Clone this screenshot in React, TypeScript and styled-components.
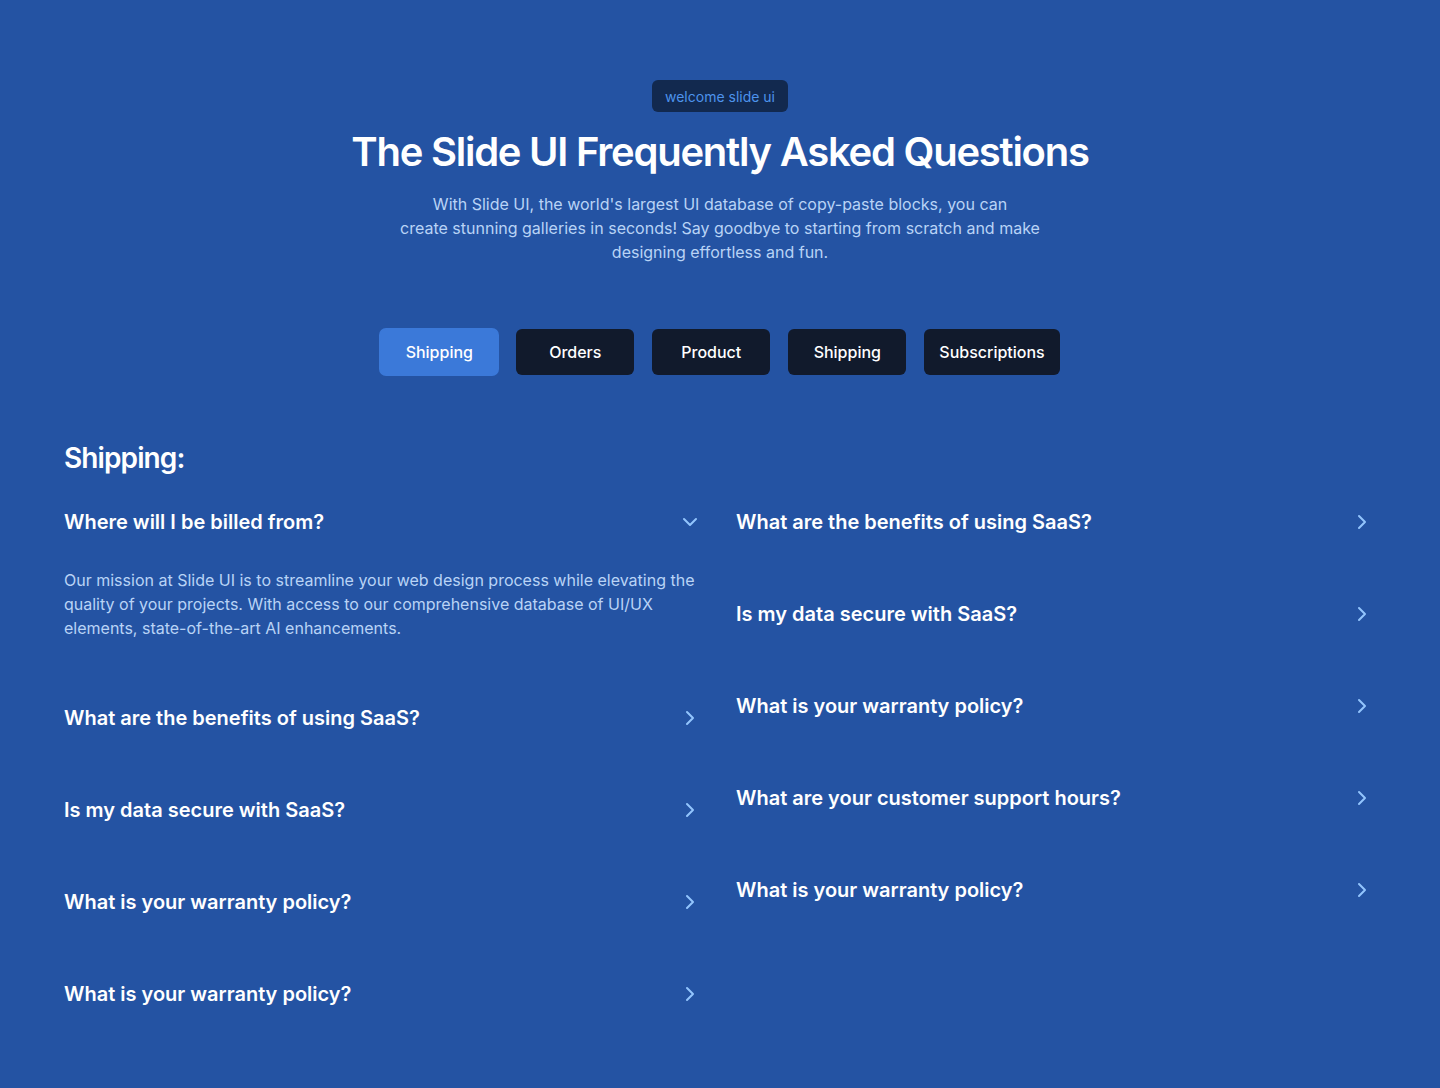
import React, { useState } from 'react';
import styled, { createGlobalStyle } from 'styled-components';
import { ChevronDown, ChevronRight } from 'lucide-react';

const GlobalStyle = createGlobalStyle`
  html, body {
    margin: 0;
    padding: 0;
    background: #2453a3;
  }
  body {
    font-family: Inter, 'Noto Sans', sans-serif;
    -webkit-font-smoothing: antialiased;
  }
`;

const tabs = ['Shipping', 'Orders', 'Product', 'Shipping', 'Subscriptions'];

const answer =
  'Our mission at Slide UI is to streamline your web design process while elevating the quality of your projects. With access to our comprehensive database of UI/UX elements, state-of-the-art AI enhancements.';

const leftItems = [
  'Where will I be billed from?',
  'What are the benefits of using SaaS?',
  'Is my data secure with SaaS?',
  'What is your warranty policy?',
  'What is your warranty policy?',
];

const rightItems = [
  'What are the benefits of using SaaS?',
  'Is my data secure with SaaS?',
  'What is your warranty policy?',
  'What are your customer support hours?',
  'What is your warranty policy?',
];

const App: React.FC = () => {
  const [activeTab, setActiveTab] = useState(0);
  const [open, setOpen] = useState<string>('l-0');

  const renderItem = (q: string, key: string) => {
    const isOpen = open === key;
    return (
      <Item key={key}>
        <Question onClick={() => setOpen(isOpen ? '' : key)}>
          <span>{q}</span>
          <IconWrap>{isOpen ? <ChevronDown size={24} strokeWidth={2} /> : <ChevronRight size={24} strokeWidth={2} />}</IconWrap>
        </Question>
        {isOpen && <Answer>{answer}</Answer>}
      </Item>
    );
  };

  return (
    <Page>
      <GlobalStyle />
      <Header>
        <Badge>welcome slide ui</Badge>
        <Title>The Slide UI Frequently Asked Questions</Title>
        <Lead>
          With Slide UI, the world's largest UI database of copy-paste blocks, you can
          <br />
          create stunning galleries in seconds! Say goodbye to starting from scratch and make designing effortless and
          fun.
        </Lead>
      </Header>
      <Tabs>
        {tabs.map((t, i) => (
          <Tab key={i} $active={i === activeTab} onClick={() => setActiveTab(i)}>
            {t}
          </Tab>
        ))}
      </Tabs>
      <Section>
        <SectionTitle>{tabs[activeTab]}:</SectionTitle>
        <Columns>
          <Column>{leftItems.map((q, i) => renderItem(q, `l-${i}`))}</Column>
          <Column>{rightItems.map((q, i) => renderItem(q, `r-${i}`))}</Column>
        </Columns>
      </Section>
    </Page>
  );
};

const Page = styled.div`
  min-height: 1088px;
  background: #2453a3;
  padding: 80px 64px 48px;
  box-sizing: border-box;
`;

const Header = styled.header`
  display: flex;
  flex-direction: column;
  align-items: center;
  text-align: center;
`;

const Badge = styled.span`
  display: inline-flex;
  align-items: center;
  height: 32px;
  padding: 0 13px;
  border-radius: 6px;
  background: #12294f;
  color: #4d93ec;
  font-size: 14px;
`;

const Title = styled.h1`
  margin: 16px 0 0;
  color: #ffffff;
  font-size: 40px;
  line-height: 48px;
  font-weight: 600;
  letter-spacing: -1.25px;
`;

const Lead = styled.p`
  margin: 16px 0 0;
  max-width: 660px;
  color: #b9d3f6;
  font-size: 16px;
  line-height: 24px;
`;

const Tabs = styled.nav`
  display: flex;
  justify-content: center;
  align-items: center;
  gap: 18px;
  margin-top: 65px;
`;

const Tab = styled.button<{ $active: boolean }>`
  height: 46px;
  min-width: 118px;
  padding: 0 15px;
  border: none;
  border-radius: 6px;
  background: ${(p) => (p.$active ? '#3b79d9' : '#111a2c')};
  box-shadow: ${(p) => (p.$active ? '0 0 0 1px #3b79d9' : 'none')};
  color: #ffffff;
  font-family: inherit;
  font-size: 16px;
  font-weight: 500;
  cursor: pointer;
`;

const Section = styled.section`
  margin-top: 65px;
`;

const SectionTitle = styled.h2`
  margin: 0;
  color: #ffffff;
  font-size: 28px;
  line-height: 36px;
  font-weight: 600;
  letter-spacing: -0.9px;
`;

const Columns = styled.div`
  display: grid;
  grid-template-columns: 1fr 1fr;
  column-gap: 32px;
  margin-top: 31px;
`;

const Column = styled.div`
  display: flex;
  flex-direction: column;
`;

const Item = styled.div`
  padding-bottom: 62px;
`;

const Question = styled.div`
  display: flex;
  justify-content: space-between;
  align-items: center;
  height: 30px;
  color: #ffffff;
  font-size: 20px;
  font-weight: 600;
  cursor: pointer;
`;

const IconWrap = styled.span`
  display: flex;
  color: #93c5fd;
  margin-right: 2px;
`;

const Answer = styled.p`
  margin: 31px 0 1px;
  color: #b9d3f6;
  font-size: 16px;
  line-height: 24px;
`;

export default App;
